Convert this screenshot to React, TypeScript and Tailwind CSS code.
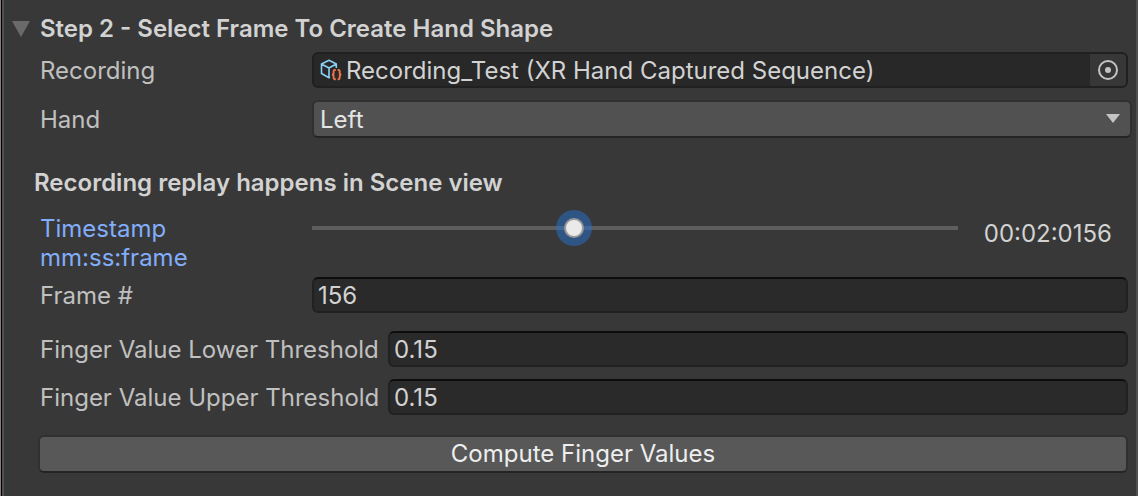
import { useState } from 'react';
import type { ReactNode } from 'react';

const fieldClass =
  'block h-9 w-full min-w-0 rounded-md border-2 border-[#212121] border-t-[#0d0d0d] bg-[#2a2a2a] px-1 text-[#d2d2d2] outline-none';

function Row({ id, label, wide, children }: { id: string; label: string; wide?: boolean; children: ReactNode }) {
  return (
    <div className="flex items-center pl-9 pr-2">
      <label htmlFor={id} className={wide ? 'w-[348px] shrink-0 whitespace-nowrap' : 'w-[272px] shrink-0'}>
        {label}
      </label>
      <div className="min-w-0 flex-1">{children}</div>
    </div>
  );
}

function AssetIcon() {
  return (
    <svg viewBox="0 0 22 22" className="size-[22px] shrink-0" fill="none" aria-hidden="true">
      <path
        d="M16.3 9V5L9 1.3 1.5 5v9.5L9 18.8l1-.6M1.5 5 9 9l7.3-4M9 9v9.8"
        stroke="#8bd0f5"
        strokeWidth="1.6"
        strokeLinejoin="round"
      />
      <path
        d="M15.8 11h-1c-.8 0-1.2.4-1.2 1.2v2c0 .9-.5 1.4-1.7 1.4 1.2 0 1.7.5 1.7 1.4v2c0 .8.4 1.2 1.2 1.2h1M17.6 11h.9c.8 0 1.2.4 1.2 1.2v2c0 .9.5 1.4 1.7 1.4-1.2 0-1.7.5-1.7 1.4v2c0 .8-.4 1.2-1.2 1.2h-.9"
        stroke="#f0744b"
        strokeWidth="1.9"
      />
    </svg>
  );
}

export default function App() {
  const [frame, setFrame] = useState(156);
  const [hand, setHand] = useState('Left');
  const [lower, setLower] = useState('0.15');
  const [upper, setUpper] = useState('0.15');
  const [open, setOpen] = useState(true);

  const seconds = Math.floor(frame / 72);
  const pad = (value: number, size: number) => String(value).padStart(size, '0');
  const timestamp = `${pad(Math.floor(seconds / 60), 2)}:${pad(seconds % 60, 2)}:${pad(frame, 4)}`;

  return (
    <div className="flex min-h-screen border-l border-[#8f7c7a] bg-[#383838] font-['Inter','Liberation_Sans',sans-serif] text-2xl leading-[29px] text-[#c0c0c0]">
      <div className="w-px bg-black" />
      <main className="min-w-0 flex-1 border-x-2 border-l-[#4c5152] border-r-[#505050] pb-5 pt-3.5">
        <h2 className="font-semibold text-[#d2d2d2]">
          <button type="button" aria-expanded={open} onClick={() => setOpen(!open)} className="flex items-center pl-2 text-left">
            <svg viewBox="0 0 18 16" className="mr-2.5 h-4 w-[18px]" aria-hidden="true">
              <path d="M0 0h18L9 16z" fill="#6a6a6a" />
            </svg>
            Step 2 - Select Frame To Create Hand Shape
          </button>
        </h2>

        {open && (
          <div className="pt-[9px]">
            <Row id="recording" label="Recording">
              <div className="flex h-9 items-center overflow-hidden rounded-md border-2 border-[#202020] bg-[#282828] pl-1.5">
                <AssetIcon />
                <input
                  id="recording"
                  readOnly
                  value="Recording_Test (XR Hand Captured Sequence)"
                  className="ml-1 min-w-0 flex-1 bg-transparent text-[#d2d2d2] outline-none"
                />
                <button type="button" aria-label="Select recording" className="flex h-full w-9 items-center justify-center bg-[#373737]">
                  <svg viewBox="0 0 20 20" className="size-5" aria-hidden="true">
                    <circle cx="10" cy="10" r="9" fill="none" stroke="#c4c4c4" strokeWidth="2" />
                    <circle cx="10" cy="10" r="3" fill="#c4c4c4" />
                  </svg>
                </button>
              </div>
            </Row>

            <div className="flex items-center pl-9 pr-1 pt-3">
              <label htmlFor="hand" className="w-[272px] shrink-0">
                Hand
              </label>
              <div className="relative min-w-0 flex-1">
                <select
                  id="hand"
                  value={hand}
                  onChange={(event) => setHand(event.target.value)}
                  className="block h-[38px] w-full appearance-none rounded-md border-2 border-[#303030] border-b-[#242424] bg-[#515151] px-1.5 text-[#e4e4e4] outline-none"
                >
                  <option>Left</option>
                  <option>Right</option>
                </select>
                <svg viewBox="0 0 14 9" className="pointer-events-none absolute right-3 top-3.5 h-[9px] w-3.5" aria-hidden="true">
                  <path d="M0 0h14L7 9z" fill="#c4c4c4" />
                </svg>
              </div>
            </div>

            <h3 className="pl-[30px] pt-[30px] font-semibold text-[#d2d2d2]">Recording replay happens in Scene view</h3>

            <div className="flex pl-9 pr-6 pt-[17px]">
              <label htmlFor="timestamp" className="w-[272px] shrink-0 text-[#82adf8]">
                Timestamp
                <br />
                mm:ss:frame
              </label>
              <input
                id="timestamp"
                type="range"
                min={0}
                max={387}
                value={frame}
                onChange={(event) => setFrame(Number(event.target.value))}
                className="h-7 min-w-0 flex-1 appearance-none bg-transparent outline-none [&::-webkit-slider-runnable-track]:h-1 [&::-webkit-slider-runnable-track]:bg-[#5e5e5e] [&::-webkit-slider-thumb]:-mt-2 [&::-webkit-slider-thumb]:size-5 [&::-webkit-slider-thumb]:appearance-none [&::-webkit-slider-thumb]:rounded-full [&::-webkit-slider-thumb]:border-2 [&::-webkit-slider-thumb]:border-[#999999] [&::-webkit-slider-thumb]:bg-[#eaeaea] [&::-webkit-slider-thumb]:shadow-[0_0_0_8px_rgba(38,114,210,0.5)]"
              />
              <output htmlFor="timestamp" className="w-[154px] shrink-0 pt-[5px] text-right text-[#d2d2d2]">
                {timestamp}
              </output>
            </div>

            <div className="flex flex-col pt-[5px]">
              <Row id="frame" label="Frame #">
                <input
                  id="frame"
                  value={frame}
                  onChange={(event) => setFrame(Number(event.target.value) || 0)}
                  className={fieldClass}
                />
              </Row>
              <div className="flex flex-col gap-3 pt-[18px]">
                <Row id="lower" label="Finger Value Lower Threshold" wide>
                  <input id="lower" value={lower} onChange={(event) => setLower(event.target.value)} className={fieldClass} />
                </Row>
                <Row id="upper" label="Finger Value Upper Threshold" wide>
                  <input id="upper" value={upper} onChange={(event) => setUpper(event.target.value)} className={fieldClass} />
                </Row>
              </div>
            </div>

            <div className="pl-[34px] pr-2 pt-5">
              <button
                type="button"
                className="block h-[38px] w-full rounded-md border-2 border-[#303030] border-b-[#242424] bg-[#585858] leading-[34px] text-[#eeeeee]"
              >
                Compute Finger Values
              </button>
            </div>
          </div>
        )}
      </main>
    </div>
  );
}
